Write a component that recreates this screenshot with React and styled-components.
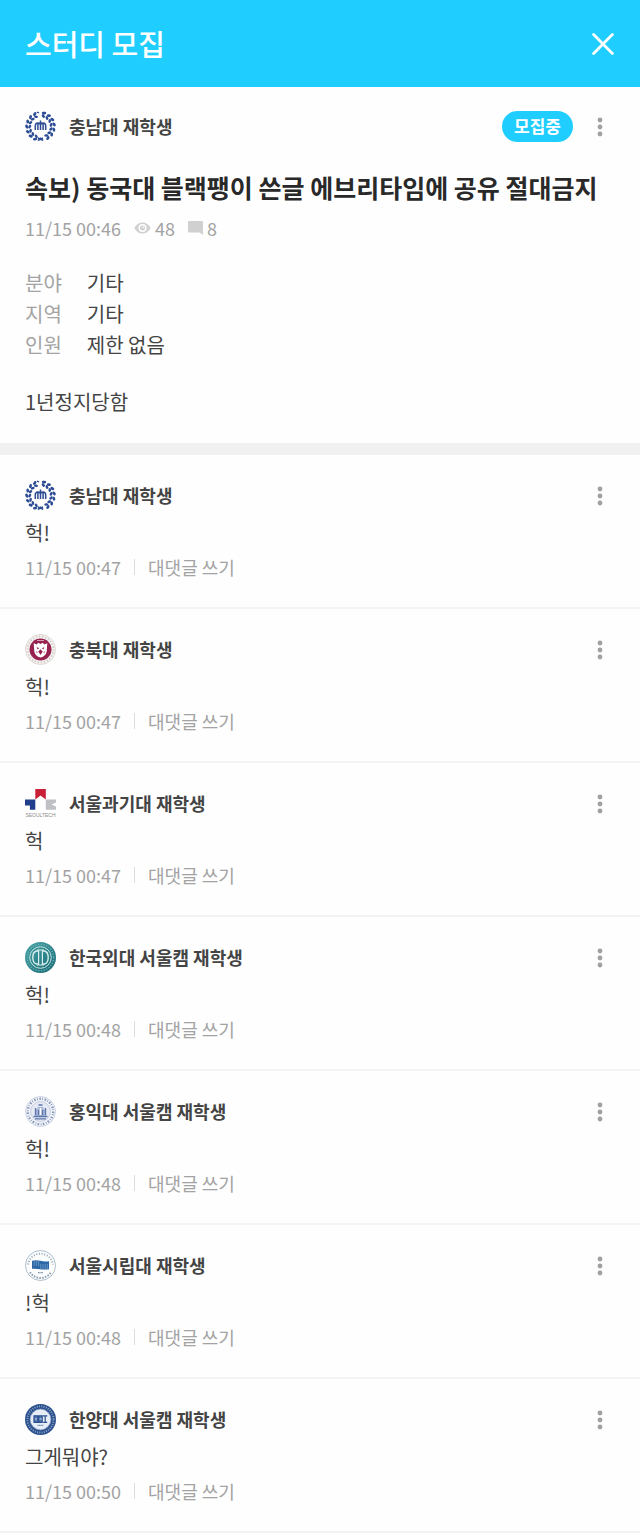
import React from 'react';
import styled, { createGlobalStyle } from 'styled-components';

const comments = [
  { id: 1, school: 'cnu', author: '충남대 재학생', text: '헉!', date: '11/15 00:47' },
  { id: 2, school: 'cbnu', author: '충북대 재학생', text: '헉!', date: '11/15 00:47' },
  { id: 3, school: 'seoultech', author: '서울과기대 재학생', text: '헉', date: '11/15 00:47' },
  { id: 4, school: 'hufs', author: '한국외대 서울캠 재학생', text: '헉!', date: '11/15 00:48' },
  { id: 5, school: 'hongik', author: '홍익대 서울캠 재학생', text: '헉!', date: '11/15 00:48' },
  { id: 6, school: 'uos', author: '서울시립대 재학생', text: '!헉', date: '11/15 00:48' },
  { id: 7, school: 'hanyang', author: '한양대 서울캠 재학생', text: '그게뭐야?', date: '11/15 00:50' },
];

const info = [
  { label: '분야', value: '기타' },
  { label: '지역', value: '기타' },
  { label: '인원', value: '제한 없음' },
];

// School emblems, all on a 31x31 canvas
const leafAngles = [20, 42, 64, 86, 108, 130, 152, 208, 230, 252, 274, 296, 318, 340];

const emblems = {
  cnu: (
    <>
      {leafAngles.map((angle) => (
        <g key={angle} transform={`rotate(${angle} 15.5 15.5)`} fill="#2c4c94">
          <ellipse cx="14.4" cy="1.8" rx="2.1" ry="1.4" transform="rotate(-32 14.4 1.8)" />
          <ellipse cx="14.6" cy="4.8" rx="2" ry="1.3" transform="rotate(28 14.6 4.8)" />
        </g>
      ))}
      <path d="M12 1.2l2 .6M19 1.2l-2 .6M12.8 29.5l2.7-2.3 2.7 2.3M13 27l5 2.4M18 27l-5 2.4" stroke="#2c4c94" strokeWidth="1.4" fill="none" />
      <path d="M10.3 19v-4.2q0-2.8 2.6-2.8 2.6 0 2.6 2.3 0-2.3 2.6-2.3 2.6 0 2.6 2.8V19M15.5 9.4V19M12.9 12v7M18.1 12v7" stroke="#2c4c94" strokeWidth="1.5" fill="none" />
    </>
  ),
  cbnu: (
    <>
      <circle cx="15.5" cy="15.5" r="15" fill="#f6f3f1" stroke="#d4cfcd" strokeWidth=".8" />
      <circle cx="15.5" cy="15.5" r="12.9" fill="none" stroke="#cfc6c6" strokeWidth="1.7" strokeDasharray="1.3 1.8" />
      <circle cx="15.5" cy="15.5" r="11" fill="#96234f" />
      <path d="M8.7 9.3l3.1 1.1 1.3-1.6 2.4 1.2 2.4-1.2 1.3 1.6 3.1-1.1-.6 8.1q-.8 4.4-6.2 6.2-5.4-1.8-6.2-6.2z" fill="#fff" />
      <path d="M11.6 13.1l2.5 1.1-1.5 1.3zM19.4 13.1l-2.5 1.1 1.5 1.3zM15.5 15.3l2.2 2.3-2.2 3.3-2.2-3.3zM10.8 17.2l1.8 1.1-.7 1zM20.2 17.2l-1.8 1.1.7 1z" fill="#96234f" />
      <path d="M12 6.5h7" stroke="#e5bccb" strokeWidth=".8" />
    </>
  ),
  seoultech: (
    <>
      <path d="M10.3 1h10.5v10.4l-5.3-4-5.2 4z" fill="#c91f37" />
      <path d="M0 11.4h10.3v10.4H4.9v-4.3H0z" fill="#203e8c" />
      <path d="M20.8 11.4H31v3.2l-4.4 2 4.4 2v3.2H20.8z" fill="#bfc0c4" />
      <text x="15.5" y="29" textAnchor="middle" fontFamily="'Liberation Sans', sans-serif" fontSize="5" fill="#8c8c8c">SEOULTECH</text>
    </>
  ),
  hufs: (
    <>
      <defs>
        <linearGradient id="hufs-fill" x1="0" y1="0" x2="1" y2="1">
          <stop offset="0" stopColor="#4aa3a8" />
          <stop offset="1" stopColor="#176973" />
        </linearGradient>
      </defs>
      <circle cx="15.5" cy="15.5" r="15.5" fill="url(#hufs-fill)" />
      <circle cx="15.5" cy="15.5" r="13.2" fill="none" stroke="#6fb4b7" strokeWidth="1.3" strokeDasharray="1.2 1.5" />
      <circle cx="15.5" cy="15.5" r="10.8" fill="none" stroke="#c4e4e2" strokeWidth="1" />
      <path d="M13 9h-1.6Q7.8 10 7.8 15.5t3.6 6.5H13M18 9h1.6q3.6 1 3.6 6.5T19.6 22H18" fill="none" stroke="#d9efed" strokeWidth="1.4" />
      <path d="M13.6 8v15M17.4 8v15M12 8h7M12 23h7" fill="none" stroke="#d9efed" strokeWidth="1.2" />
    </>
  ),
  hongik: (
    <>
      <circle cx="15.5" cy="15.5" r="15" fill="#f5f7fb" stroke="#c1c9dc" strokeWidth=".8" />
      <circle cx="15.5" cy="15.5" r="12.7" fill="none" stroke="#8797b8" strokeWidth="2.4" strokeDasharray="1.6 1.3 .8 1.6" />
      <circle cx="15.5" cy="15.5" r="10" fill="#e4e9f3" stroke="#b3bdd6" strokeWidth=".7" />
      <path d="M10 20V13h2.5v-2h6v2H21v7z" fill="#a9b7d6" />
      <path d="M10.5 12v7M20.5 12v7M13.5 14v5M17.5 14v5M8.5 20.5h14M10 22.8h11M13.5 9h4" stroke="#5d76ac" strokeWidth="1.3" />
      <path d="M15.5 12v7" stroke="#fff" strokeWidth="1.6" />
    </>
  ),
  uos: (
    <>
      <circle cx="15.5" cy="15.5" r="15" fill="#fbfdfe" stroke="#8fa4b4" strokeWidth=".7" />
      <path d="M3.2 14.5a12.4 12.4 0 0 1 24.6 0" fill="none" stroke="#93a5b2" strokeWidth="1.9" strokeDasharray="1 1.7" />
      <path d="M5 22.2a12.4 12.4 0 0 0 21 0" fill="none" stroke="#8ba0ad" strokeWidth="1.9" strokeDasharray="1.6 1.2" />
      <path d="M7 10.8q4-.9 8.2 0t8.8.4v8q-4.6.6-8.8 0T7 18.8z" fill="#2c68a6" />
      <path d="M9.2 10.8v5M11.4 10.8v5M13.6 11v5M15.8 14v5M18 14v5M20.2 14v5M22.3 14v5" stroke="#79a5cf" strokeWidth=".7" />
      <path d="M13 22.6h5" stroke="#7890a3" strokeWidth="1.1" strokeDasharray="1 .4" />
    </>
  ),
  hanyang: (
    <>
      <circle cx="15.5" cy="15.5" r="15.5" fill="#2a4f8b" />
      <circle cx="15.5" cy="15.5" r="13.1" fill="none" stroke="#91a8cd" strokeWidth="1.9" strokeDasharray="1 1.3" />
      <circle cx="15.5" cy="15.5" r="10.4" fill="#e6edf6" stroke="#8aa2c8" strokeWidth=".8" />
      <path d="M9 11.8h4v6.5H9zM13.8 11.8h3.4v6.5h-3.4zM18 11.8h4.3M20.2 11.8v6.5M18.2 18.3h4" fill="#5879b0" stroke="#2a508f" strokeWidth="1.2" />
      <path d="M10 15h2M14.3 15h2.4" stroke="#dbe5f2" strokeWidth=".9" />
      <path d="M12.6 21.4h6" stroke="#728ab0" strokeWidth="1.3" strokeDasharray="1.1 .4" />
    </>
  ),
};

const Author = ({ school, name }) => (
  <AuthorBox>
    <Emblem viewBox="0 0 31 31" aria-hidden="true">{emblems[school]}</Emblem>
    <AuthorName>{name}</AuthorName>
  </AuthorBox>
);

const MoreMenu = () => (
  <MoreButton type="button" aria-label="더보기">
    <svg width="6" height="20" viewBox="0 0 6 20" fill="#a0a0a0">
      <circle cx="3" cy="3" r="2.4" />
      <circle cx="3" cy="10" r="2.4" />
      <circle cx="3" cy="17" r="2.4" />
    </svg>
  </MoreButton>
);

const App = () => {
  return (
    <>
      <GlobalStyle />
      <Header>
        <HeaderTitle>스터디 모집</HeaderTitle>
        <CloseButton type="button" aria-label="닫기">
          <svg width="22" height="22" viewBox="0 0 22 22" fill="none" stroke="#fff" strokeWidth="2.8" strokeLinecap="round">
            <path d="M1.6 1.6l18.8 18.8M20.4 1.6L1.6 20.4" />
          </svg>
        </CloseButton>
      </Header>

      <main>
        <Post>
          <Row>
            <Author school="cnu" name="충남대 재학생" />
            <Actions>
              <Badge>모집중</Badge>
              <MoreMenu />
            </Actions>
          </Row>
          <PostTitle>속보) 동국대 블랙팽이 쓴글 에브리타임에 공유 절대금지</PostTitle>
          <PostMeta>
            <time>11/15 00:46</time>
            <Count>
              <svg width="17" height="12" viewBox="0 0 17 12" aria-label="조회">
                <path d="M.3 6Q3.4.5 8.5.5T16.7 6Q13.6 11.5 8.5 11.5T.3 6z" fill="#d0d0d0" />
                <circle cx="8.5" cy="6" r="4" fill="#fff" />
                <circle cx="8.5" cy="6" r="2.5" fill="#d0d0d0" />
                <circle cx="9.4" cy="5.2" r=".8" fill="#fff" />
              </svg>
              48
            </Count>
            <Count>
              <svg width="15" height="14" viewBox="0 0 15 14" aria-label="댓글">
                <path d="M1 0h13q1 0 1 1v13l-3.5-2.5H1q-1 0-1-1V1q0-1 1-1z" fill="#d0d0d0" />
              </svg>
              8
            </Count>
          </PostMeta>
          <InfoList>
            {info.map((item) => (
              <React.Fragment key={item.label}>
                <dt>{item.label}</dt>
                <dd>{item.value}</dd>
              </React.Fragment>
            ))}
          </InfoList>
          <PostBody>1년정지당함</PostBody>
        </Post>

        <CommentList>
          {comments.map((comment) => (
            <Comment key={comment.id}>
              <Row>
                <Author school={comment.school} name={comment.author} />
                <MoreMenu />
              </Row>
              <CommentText>{comment.text}</CommentText>
              <CommentMeta>
                <time>{comment.date}</time>
                <Divider />
                <ReplyButton type="button">대댓글 쓰기</ReplyButton>
              </CommentMeta>
            </Comment>
          ))}
        </CommentList>
      </main>
    </>
  );
};

// Styled Components
const GlobalStyle = createGlobalStyle`
  * {
    box-sizing: border-box;
  }

  body {
    margin: 0;
    background: #fefefe;
    color: #444;
    font-family: 'Noto Sans CJK KR', sans-serif;
  }

  button {
    padding: 0;
    border: none;
    background: none;
    font-family: inherit;
    cursor: pointer;
  }

  svg {
    display: block;
    flex-shrink: 0;
  }
`;

const Header = styled.header`
  display: flex;
  align-items: center;
  justify-content: space-between;
  height: 87px;
  padding: 0 26px 0 25px;
  background: #1fceff;
  color: #fff;
`;

const HeaderTitle = styled.h1`
  margin: 0;
  padding-bottom: 2px;
  font-size: 29px;
  font-weight: 500;
  line-height: 40px;
`;

const CloseButton = styled.button`
  display: flex;
`;

const Post = styled.article`
  padding: 24px 25px 26px;
  border-bottom: 12px solid #f1f1f1;
`;

const Row = styled.div`
  display: flex;
  align-items: center;
  justify-content: space-between;
`;

const AuthorBox = styled.div`
  display: flex;
  align-items: center;
  gap: 13px;
`;

const Emblem = styled.svg`
  width: 31px;
  height: 31px;
  overflow: visible;
`;

const AuthorName = styled.span`
  padding-bottom: 2px;
  font-size: 18px;
  font-weight: 700;
  line-height: 28px;
`;

const Actions = styled.div`
  display: flex;
  align-items: center;
  gap: 12px;
`;

const Badge = styled.span`
  padding: 0 12px 1px;
  border-radius: 16px;
  background: #1fceff;
  color: #fff;
  font-size: 17px;
  font-weight: 700;
  line-height: 30px;
`;

const MoreButton = styled.button`
  display: flex;
  align-items: center;
  justify-content: center;
  width: 30px;
  height: 31px;
`;

const PostTitle = styled.h2`
  margin: 27px 0 0;
  color: #292929;
  font-size: 25px;
  font-weight: 700;
  line-height: 36px;
`;

const PostMeta = styled.div`
  display: flex;
  align-items: center;
  gap: 13px;
  margin-top: 11px;
  color: #a3a3a3;
  font-size: 18px;
  line-height: 24px;
`;

const Count = styled.span`
  display: flex;
  align-items: center;
  gap: 4px;
`;

const InfoList = styled.dl`
  display: grid;
  grid-template-columns: auto 1fr;
  column-gap: 25px;
  margin: 27px 0 0;
  font-size: 20px;
  line-height: 31px;

  dt {
    color: #a3a3a3;
  }

  dd {
    margin: 0;
  }
`;

const PostBody = styled.p`
  margin: 26px 0 0;
  font-size: 20px;
  line-height: 31px;
`;

const CommentList = styled.ul`
  margin: 0;
  padding: 0;
  list-style: none;
`;

const Comment = styled.li`
  padding: 25px 25px 28px;
  border-bottom: 2px solid #f3f3f3;
`;

const CommentText = styled.p`
  margin: 7px 0 0;
  font-size: 20px;
  line-height: 30px;
`;

const CommentMeta = styled.div`
  display: flex;
  align-items: center;
  gap: 13px;
  margin-top: 7px;
  color: #a3a3a3;
  font-size: 18px;
  line-height: 24px;
`;

const Divider = styled.span`
  width: 1px;
  height: 16px;
  background: #ddd;
`;

const ReplyButton = styled.button`
  color: #a3a3a3;
  font-size: 18px;
  line-height: 24px;
`;

export default App;
